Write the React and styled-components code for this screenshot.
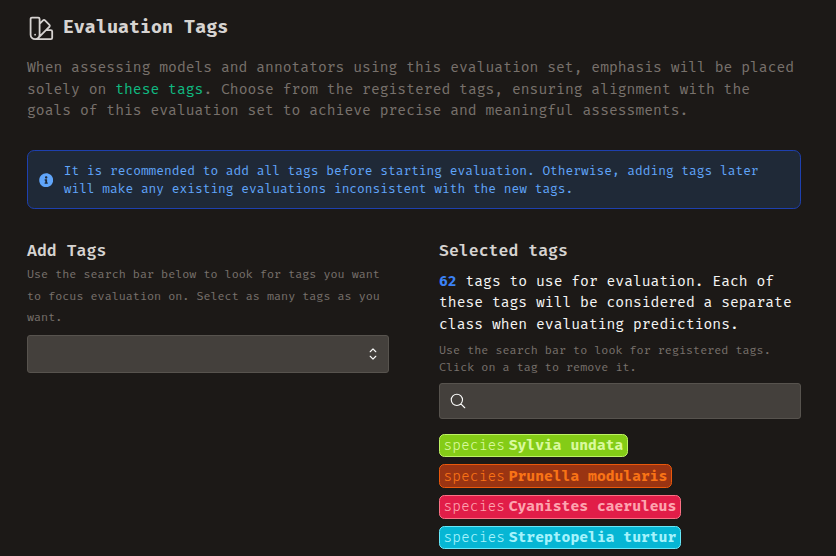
import React from "react";
import styled, { createGlobalStyle } from "styled-components";
import { HiOutlineSwatch, HiChevronUpDown, HiOutlineMagnifyingGlass } from "react-icons/hi2";
import { FaInfoCircle } from "react-icons/fa";

const GlobalStyle = createGlobalStyle`
  * { box-sizing: border-box; }
  body {
    margin: 0;
    background: #1c1917;
    color: #f5f5f4;
    font-family: "Fira Code", "DejaVu Sans Mono", monospace;
    overflow: hidden;
  }
  h1, h2, p { margin: 0; }
`;

const Page = styled.main`
  width: 836px;
  height: 556px;
  padding: 13px 35px 0 27px;
  overflow: hidden;
`;

const Title = styled.h1`
  display: flex;
  align-items: center;
  gap: 7px;
  height: 29px;
  color: #d6d3d1;
  font-size: 17.93px;
  line-height: 25.2px;
  font-weight: 700;
  svg { width: 28.8px; height: 28.8px; stroke-width: 1.5; margin-top: 1px; }
`;

const Intro = styled.p`
  margin-top: 15px;
  color: #78716c;
  font-size: 14.34px;
  line-height: 21.6px;
  white-space: nowrap;
`;

const Accent = styled.span`
  color: #10b981;
`;

const Notice = styled.div`
  display: flex;
  align-items: center;
  gap: 10.3px;
  height: 59px;
  margin-top: 28px;
  padding: 1px 11px 0;
  border: 1px solid #1e40af;
  border-radius: 7.2px;
  background: #1f2937;
  color: #60a5fa;
  font-size: 12.55px;
  line-height: 18px;
  white-space: nowrap;
  svg { width: 14.4px; height: 14.4px; flex: none; }
`;

const Columns = styled.div`
  display: grid;
  grid-template-columns: 362px 362px;
  justify-content: space-between;
  margin-top: 29px;
`;

const Column = styled.section`
  display: flex;
  flex-direction: column;
  white-space: nowrap;
`;

const Heading = styled.h2`
  color: #d6d3d1;
  font-size: 16.13px;
  line-height: 26px;
  font-weight: 600;
`;

const Hint = styled.p`
  margin-top: ${(p) => p.$gap}px;
  color: #78716c;
  font-size: 11.48px;
  line-height: ${(p) => p.$leading}px;
`;

const Summary = styled.p`
  margin-top: 7px;
  font-size: 14.34px;
  line-height: 21.5px;
  b { color: #3b82f6; }
`;

const Field = styled.div`
  display: flex;
  align-items: center;
  justify-content: ${(p) => (p.$end ? "flex-end" : "flex-start")};
  height: ${(p) => p.$height}px;
  margin-top: ${(p) => p.$gap}px;
  padding: 0 ${(p) => (p.$end ? 6 : 9)}px;
  border: 1px solid #57534e;
  border-radius: 3px;
  background: #44403c;
  color: #fafaf9;
  svg { width: ${(p) => p.$icon}px; height: ${(p) => p.$icon}px; }
`;

const TagList = styled.div`
  display: flex;
  flex-direction: column;
  align-items: flex-start;
  gap: 7.4px;
  margin-top: 14.3px;
`;

const Tag = styled.button`
  display: flex;
  align-items: center;
  gap: 3.6px;
  height: 23.4px;
  padding: 1.8px 3.6px 0 3.4px;
  border: 1px solid ${(p) => p.$line};
  border-radius: 5.4px;
  background: ${(p) => p.$fill};
  color: ${(p) => p.$text};
  font: inherit;
  font-size: 14.34px;
  line-height: 20.6px;
  cursor: pointer;
`;

const TagKey = styled.span`
  font-weight: 300;
`;

const TagValue = styled.span`
  font-weight: 700;
`;

const tags = [
  { name: "Sylvia undata", fill: "#84cc16", line: "#bef264", text: "#d9f99d" },
  { name: "Prunella modularis", fill: "#9a3412", line: "#ea580c", text: "#f97316" },
  { name: "Cyanistes caeruleus", fill: "#e11d48", line: "#fb7185", text: "#fda4af" },
  { name: "Streptopelia turtur", fill: "#06b6d4", line: "#67e8f9", text: "#a5f3fc" },
];

export default function App() {
  return (
    <>
      <GlobalStyle />
      <Page>
        <Title><HiOutlineSwatch />Evaluation Tags</Title>
        <Intro>
          When assessing models and annotators using this evaluation set, emphasis will be placed<br />
          solely on <Accent>these tags</Accent>. Choose from the registered tags, ensuring alignment with the<br />
          goals of this evaluation set to achieve precise and meaningful assessments.
        </Intro>
        <Notice>
          <FaInfoCircle />
          <p>
            It is recommended to add all tags before starting evaluation. Otherwise, adding tags later<br />
            will make any existing evaluations inconsistent with the new tags.
          </p>
        </Notice>
        <Columns>
          <Column>
            <Heading>Add Tags</Heading>
            <Hint $gap={0.5} $leading={21.6}>
              Use the search bar below to look for tags you want<br />
              to focus evaluation on. Select as many tags as you<br />
              want.
            </Hint>
            <Field $end $height={38} $gap={5.5} $icon={18}><HiChevronUpDown /></Field>
          </Column>
          <Column>
            <Heading>Selected tags</Heading>
            <Summary>
              <b>62</b> tags to use for evaluation. Each of<br />
              these tags will be considered a separate<br />
              class when evaluating predictions.
            </Summary>
            <Hint $gap={7} $leading={17.2}>
              Use the search bar to look for registered tags.<br />
              Click on a tag to remove it.
            </Hint>
            <Field $height={36} $gap={6.6} $icon={18}><HiOutlineMagnifyingGlass /></Field>
            <TagList>
              {tags.map((t) => (
                <Tag key={t.name} $fill={t.fill} $line={t.line} $text={t.text}>
                  <TagKey>species</TagKey>
                  <TagValue>{t.name}</TagValue>
                </Tag>
              ))}
            </TagList>
          </Column>
        </Columns>
      </Page>
    </>
  );
}
